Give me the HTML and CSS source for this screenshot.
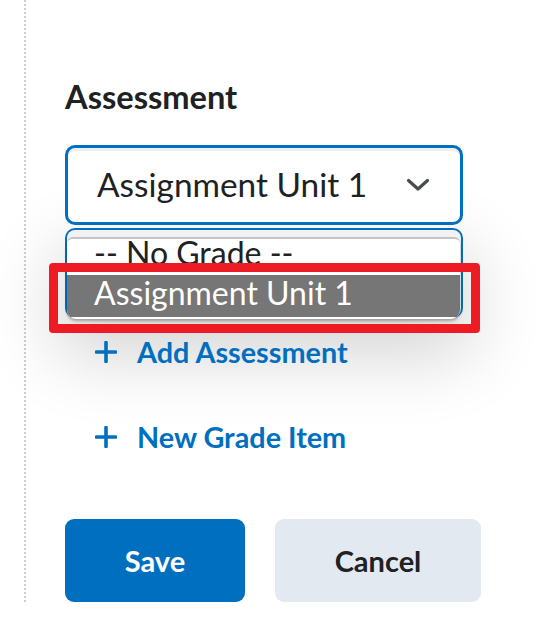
FILE: index.html
```html
<!DOCTYPE html>
<html lang="en">
<head>
<meta charset="utf-8">
<title>Assessment</title>
<link rel="stylesheet" href="styles.css">
</head>
<body>
<div class="rail">
  <div class="panel">
    <h2 class="label">Assessment</h2>
    <div class="select">
      <span class="select-text">Assignment Unit 1</span>
      <svg class="chev" width="24" height="14" viewBox="0 0 24 14"><path d="M2.5 2.5 L12 11 L21.5 2.5" fill="none" stroke="#494c4e" stroke-width="3.2" stroke-linecap="round" stroke-linejoin="round"/></svg>
    </div>
    <div class="dropdown">
      <div class="list">
        <div class="opt">-- No Grade --</div>
        <div class="opt sel">Assignment Unit 1</div>
      </div>
    </div>
    <div class="links">
      <a class="link">
        <svg class="plus" width="22" height="22" viewBox="0 0 22 22"><path d="M11 1.5 V20.5 M1.5 11 H20.5" stroke="#006fbf" stroke-width="3.6" stroke-linecap="round"/></svg>
        <span>Add Assessment</span>
      </a>
      <a class="link">
        <svg class="plus" width="22" height="22" viewBox="0 0 22 22"><path d="M11 1.5 V20.5 M1.5 11 H20.5" stroke="#006fbf" stroke-width="3.6" stroke-linecap="round"/></svg>
        <span>New Grade Item</span>
      </a>
    </div>
    <div class="buttons">
      <button class="btn primary">Save</button>
      <button class="btn secondary">Cancel</button>
    </div>
    <div class="highlight"></div>
  </div>
</div>
</body>
</html>
```
FILE: styles.css
```css
html, body {
  margin: 0;
  padding: 0;
  background: #ffffff;
}
body {
  font-family: Lato, "Noto Sans", sans-serif;
  color: #202122;
  width: 549px;
  height: 619px;
  overflow: hidden;
}
.rail {
  margin-left: 24px;
  border-left: 2px dotted #cdcdcd;
  height: 602px;
}
.panel {
  position: relative;
  padding-left: 39px;
  padding-top: 77px;
  width: 398px;
}
.label {
  margin: 0;
  font-size: 32.6px;
  line-height: 40px;
  font-weight: 700;
  color: #202122;
}
.select {
  box-sizing: border-box;
  margin-top: 28px;
  height: 80px;
  border: 3px solid #006fbf;
  border-radius: 10px;
  background: #fff;
  box-shadow: inset 0 3px 0 0 rgba(181, 189, 194, 0.25);
  display: flex;
  align-items: center;
  justify-content: space-between;
  padding: 0 30px 3px 29px;
  position: relative;
  z-index: 2;
}
.select-text {
  font-size: 33.4px;
  line-height: 40px;
}
.chev {
  display: block;
  margin-top: 3px;
}
.dropdown {
  position: relative;
  z-index: 1;
  box-sizing: border-box;
  margin-top: 3px;
  height: 90px;
  border: 2px solid #006fbf;
  border-bottom: none;
  border-radius: 10px;
  padding: 7px 1px 0 0;
  background: #f2f2f2;
  box-shadow: 0 30px 70px 10px rgba(0, 0, 0, 0.16);
}
.list {
  height: 80px;
  background: #fff;
  border-top: 2px solid #c4c4c4;
  border-radius: 6px 6px 9px 9px;
  box-shadow: 0 2px 3px rgba(0, 0, 0, 0.3);
  overflow: hidden;
}
.opt {
  height: 36px;
  font-size: 32px;
  line-height: 28px;
  padding-left: 27px;
  color: #202122;
  white-space: nowrap;
}
.opt.sel {
  height: 42px;
  line-height: 36px;
  background: #767676;
  color: #ffffff;
}
.links {
  position: relative;
  z-index: 2;
  margin-top: 17px;
  display: flex;
  flex-direction: column;
  gap: 51px;
}
.link {
  display: flex;
  align-items: center;
  gap: 20px;
  padding-left: 30px;
  font-size: 28.8px;
  line-height: 34px;
  font-weight: 700;
  color: #006fbf;
}
.plus {
  display: block;
}
.buttons {
  position: relative;
  z-index: 2;
  margin-top: 65px;
  display: flex;
  gap: 30px;
}
.btn {
  flex-shrink: 0;
  box-sizing: border-box;
  height: 83px;
  border: none;
  border-radius: 9px;
  font-family: Lato, "Noto Sans", sans-serif;
  font-size: 29px;
  font-weight: 700;
  line-height: 34px;
  padding: 0;
}
.btn.primary {
  width: 180px;
  background: #006fbf;
  color: #ffffff;
}
.btn.secondary {
  width: 206px;
  background: #e3e9f1;
  color: #202122;
}
.highlight {
  position: absolute;
  z-index: 3;
  left: 23px;
  top: 263px;
  width: 431px;
  height: 70px;
  box-sizing: border-box;
  border: 9px solid #ed1c24;
  border-radius: 4px;
}
```
